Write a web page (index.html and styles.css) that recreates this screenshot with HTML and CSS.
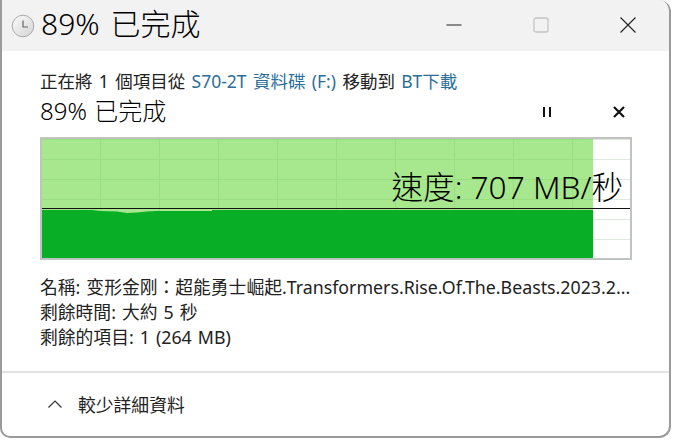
FILE: index.html
```html
<!DOCTYPE html>
<html lang="zh-Hant">
<head>
	<meta charset="UTF-8">
	<meta name="viewport" content="width=device-width, initial-scale=1.0">
	<title>89% 已完成</title>
	<link rel="stylesheet" href="styles.css">
</head>
<body>
	<div class="window">
		<div class="titlebar">
			<svg class="clock" width="24" height="24" viewBox="0 0 24 24">
				<defs>
					<linearGradient id="clockFace" x1="0" y1="0" x2="1" y2="1">
						<stop offset="0" stop-color="#fafafa"/>
						<stop offset="1" stop-color="#d4d4d4"/>
					</linearGradient>
				</defs>
				<circle cx="12" cy="12" r="10.8" fill="url(#clockFace)" stroke="#a9a9a9" stroke-width="1"/>
				<path d="M12 6.5V13H17" fill="none" stroke="#666" stroke-width="1.2"/>
			</svg>
			<div class="titleText">89% 已完成</div>
			<div class="winButtons">
				<svg width="16" height="16" viewBox="0 0 16 16"><path d="M0.5 8H15.5" stroke="#222" stroke-width="1"/></svg>
				<svg width="16" height="16" viewBox="0 0 16 16"><rect x="1" y="1" width="14" height="14" rx="2" fill="#f2f2f2" stroke="#c4c4c4" stroke-width="1.3"/></svg>
				<svg width="16" height="16" viewBox="0 0 16 16"><path d="M0.5 0.5L15.5 15.5M15.5 0.5L0.5 15.5" stroke="#222" stroke-width="1.1"/></svg>
			</div>
		</div>
		<div class="content">
			<div class="fromTo">正在將 1 個項目從 <a class="link">S70-2T 資料碟 (F:)</a> 移動到 <a class="link">BT下載</a></div>
			<div class="statusRow">
				<div class="statusText">89% 已完成</div>
				<div class="statusButtons">
					<svg width="12" height="12" viewBox="0 0 12 12"><path d="M3 1V11M9 1V11" stroke="#111" stroke-width="2"/></svg>
					<svg width="12" height="12" viewBox="0 0 12 12"><path d="M1 1L11 11M11 1L1 11" stroke="#111" stroke-width="2.2"/></svg>
				</div>
			</div>
			<div class="chart">
				<div class="chartProgress"></div>
				<svg class="chartArea" width="551" height="50" viewBox="0 0 551 50">
					<path d="M0 1H50L58 2L75 2.5L85 4L95 3.5L105 2.5L115 2H170V1H551V50H0Z" fill="#07ae26"/>
				</svg>
				<div class="speedLine"></div>
				<div class="speedLabel">速度: 707 MB/秒</div>
			</div>
			<div class="details">
				<div class="detailRow">名稱: 变形金刚：超能勇士崛起.Transformers.Rise.Of.The.Beasts.2023.2...</div>
				<div class="detailRow">剩餘時間: 大約 5 秒</div>
				<div class="detailRow">剩餘的項目: 1 (264 MB)</div>
			</div>
		</div>
		<div class="footer">
			<svg width="16" height="10" viewBox="0 0 16 10"><path d="M1.5 8.5L8 2L14.5 8.5" fill="none" stroke="#333" stroke-width="1.2"/></svg>
			<span class="footerText">較少詳細資料</span>
		</div>
	</div>
</body>
</html>
```

FILE: styles.css
```css
body {margin:0; background-color:#fff; font-family:"Noto Sans", "Noto Sans CJK TC", sans-serif; color:#222;}
.window {width:671px; height:438px; box-sizing:border-box; border:solid #9a9a9a; border-width:0 2px 2px 2px; border-radius:0 12px 12px 10px; display:flex; flex-direction:column; overflow:hidden; background-color:#fff;}

/* title bar */
.titlebar {height:51px; flex:none; background-color:#f2f2f2; display:flex; align-items:center; padding-left:9px;}
.clock {margin-right:6px; flex:none;}
.titleText {font-size:30px; font-weight:300; line-height:47px; height:51px; word-spacing:3px; color:#000; flex:1;}
.winButtons {display:flex; gap:71px; padding:0 33px 2px 0;}

/* main */
.content {flex:1; padding:0 0 0 38px;}
.fromTo {font-size:17.5px; line-height:20px; margin-top:20px; word-spacing:1.8px;}
.link {color:#2b6e99;}
.statusRow {display:flex; align-items:center; height:28px; margin-top:4px;}
.statusText {font-size:24px; font-weight:300; word-spacing:1px; color:#000; flex:1;}
.statusButtons {display:flex; gap:60px; padding:6px 44px 0 0;}

.chart {position:relative; width:592px; height:123px; margin-top:14px; box-sizing:border-box; border:2px solid #c0c4c0; overflow:hidden;
	background-color:#fff;
	background-image:linear-gradient(to right, #dfe8df 1px, transparent 1px), linear-gradient(to bottom, #dfe8df 1px, transparent 1px);
	background-size:59px 20px; background-position:-1px 0;}
.chartProgress {position:absolute; left:0; top:0; width:551px; height:100%; background-color:rgba(95, 213, 50, .55);}
.chartArea {position:absolute; left:0; top:70px;}
.speedLine {position:absolute; left:0; right:0; top:69px; height:1px; background-color:#111;}
.speedLabel {position:absolute; right:7px; top:26px; font-size:31.6px; font-weight:300; line-height:44px; color:#000;}

.details {margin-top:15px;}
.detailRow {font-size:17.8px; line-height:25px; white-space:nowrap; word-spacing:1.4px;}

/* footer */
.footer {height:65px; flex:none; box-sizing:border-box; border-top:2px solid #e2e2e2; display:flex; align-items:center; padding:0 0 2px 45px; gap:15px;}
.footerText {font-size:17.8px;}
```
